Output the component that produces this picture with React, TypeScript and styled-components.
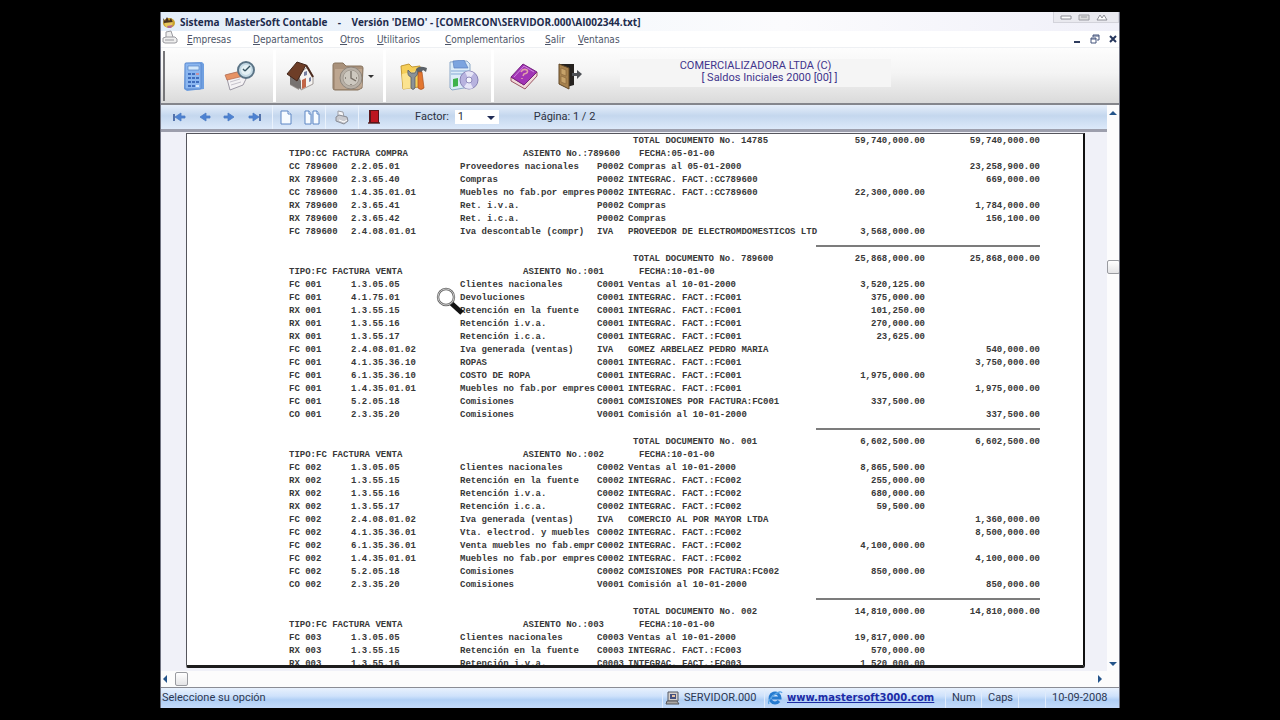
import React from "react";
import styled, { createGlobalStyle } from "styled-components";

const Global = createGlobalStyle`
  * { box-sizing: border-box; }
  body { margin: 0; background: #000; }
  button { font: inherit; color: inherit; background: none; border: 0; padding: 0; }
  svg { flex: none; }
`;

const ui = `"DejaVu Sans Condensed", "DejaVu Sans", sans-serif`;
const narrow = `Roboto, "Liberation Sans", sans-serif`;

const Desktop = styled.div`
  height: 100vh;
  padding: 12px 0;
  display: flex;
  justify-content: center;
  background: #000;
`;

const AppWindow = styled.div`
  width: 75%;
  min-width: 940px;
  display: flex;
  flex-direction: column;
  overflow: hidden;
  background: #fff;
  border-left: 1px solid #6f7280;
  border-right: 1px solid #6f7280;
`;

const TitleBar = styled.header`
  flex: none;
  height: 19px;
  display: flex;
  align-items: center;
  gap: 5px;
  padding-left: 1px;
  background: linear-gradient(90deg, #e3edf9, #f4f8fc 40%, #fbfbfd 65%, #f0f0f9);
  font: bold 10px/18px "Open Sans", sans-serif;
  color: #1d2b4c;
`;

const TitleText = styled.h1`
  flex: 1;
  margin: 0;
  font: inherit;
  white-space: pre;
`;

const WindowButtons = styled.div`
  align-self: flex-start;
  display: flex;
  gap: 6px;
  height: 11px;
  padding: 0 10px 0 6px;
  border: 1px solid #d3d3db;
  border-top: 0;
  background: #e9e9ef;
  button { display: flex; height: 10px; align-items: center; }
`;

const MenuBar = styled.nav`
  flex: none;
  height: 17px;
  display: flex;
  align-items: center;
  padding-left: 1px;
  background: #fff;
  border-bottom: 1px solid #eef0f3;
  font: 10px/15px ${ui};
  color: #4d5568;
`;

const MenuItem = styled.button<{ $w: number }>`
  width: ${(p) => p.$w}px;
  text-align: left;
  white-space: nowrap;
  &::first-letter { text-decoration: underline; }
`;

const MdiButtons = styled.div`
  margin-left: auto;
  display: flex;
  align-items: center;
  gap: 8px;
  padding-right: 1px;
  button { display: flex; }
`;

const ToolBar = styled.div`
  flex: none;
  height: 57px;
  display: flex;
  align-items: center;
  background: linear-gradient(#fdfdfd, #f4f4f4 45%, #dadada);
  border-bottom: 2px solid #85868c;
`;

const Grip = styled.span`
  width: 2px;
  height: 50px;
  margin-left: 2px;
  background: #77777a;
`;

const ToolGroup = styled.div<{ $w: number; $last?: boolean }>`
  width: ${(p) => p.$w}px;
  height: 52px;
  display: flex;
  align-items: center;
  justify-content: center;
  gap: 18px;
  border-right: ${(p) => (p.$last ? "0" : "3px solid #fff")};
`;

const ToolButton = styled.button`
  display: flex;
  align-items: center;
  gap: 4px;
`;

const CompanyBox = styled.div`
  width: 271px;
  height: 28px;
  margin: 0 0 6px 22px;
  padding-top: 1px;
  background: #f5f5f5;
  text-align: center;
  font: 11px/12px ${narrow};
  color: #41348c;
  p { margin: 0; }
  p + p { padding-left: 28px; }
`;

const Body = styled.div`
  flex: 1;
  min-height: 0;
  display: flex;
`;

const Main = styled.main`
  flex: 1;
  min-width: 0;
  display: flex;
  flex-direction: column;
`;

const NavBar = styled.div`
  flex: none;
  height: 27px;
  display: flex;
  align-items: center;
  background: linear-gradient(#e6eefa, #c4d7ee 45%, #dce9fa);
  border-bottom: 3px solid #9d9fad;
  font: 11px/14px ${narrow};
  color: #2b3040;
`;

const NavGroup = styled.div<{ $w: number; $last?: boolean }>`
  width: ${(p) => p.$w}px;
  height: 24px;
  display: flex;
  align-items: center;
  justify-content: center;
  gap: 10px;
  border-right: ${(p) => (p.$last ? "0" : "1px solid #eaf2fc")};
  button { display: flex; }
`;

const FactorLabel = styled.label`
  display: flex;
  align-items: center;
  gap: 6px;
  margin-left: 26px;
`;

const SelectWrap = styled.span`
  position: relative;
  display: flex;
  svg { position: absolute; right: 4px; top: 4px; pointer-events: none; }
`;

const FactorSelect = styled.select`
  appearance: none;
  width: 44px;
  height: 14px;
  padding: 0 3px;
  border: 0;
  background: #fff;
  font: 11px/14px ${narrow};
  color: #2b3040;
`;

const PageInfo = styled.span`
  margin-left: 35px;
`;

const Viewport = styled.section`
  position: relative;
  flex: 1;
  min-height: 0;
  padding: 1px 22px 3px 25px;
  background: #f0f1f8;
  display: flex;
`;

const Sheet = styled.div`
  flex: 1;
  min-width: 0;
  overflow: hidden;
  padding: 1px 43px 0 102px;
  background: #fff;
  border: 1px solid #55555c;
  border-right: 2px solid #111;
  border-bottom: 3px solid #1c1c1c;
  border-radius: 0 0 2px 2px;
`;

const Report = styled.table`
  width: 100%;
  table-layout: fixed;
  border-collapse: collapse;
  font: bold 9px/13px "Liberation Mono", monospace;
  color: #383838;
  td, th {
    height: 13px;
    padding: 0;
    font-weight: bold;
    text-align: left;
    white-space: nowrap;
  }
`;

const Cell = styled.td<{ $indent: number }>`
  && { padding-left: ${(p) => p.$indent}px; }
`;

const Amount = styled.td`
  && { text-align: right; }
`;

const RuleRow = styled.tr`
  && td { height: 14px; }
  hr { margin: 0; border: 0; height: 2px; background: #7c7c7c; }
`;

const Loupe = styled.svg`
  position: absolute;
  left: 275px;
  top: 155px;
`;

const VScroll = styled.div`
  flex: none;
  width: 12px;
  display: flex;
  flex-direction: column;
  align-items: center;
  justify-content: space-between;
  padding: 4px 0 3px;
  background: #fcfcfd;
  button { display: flex; }
`;

const Thumb = styled.button`
  && {
    width: 13px;
    height: 14px;
    border: 1px solid #999ba0;
    border-radius: 2px;
    background: linear-gradient(#fff, #e4e4e6);
  }
`;

const HScroll = styled.div`
  flex: none;
  height: 16px;
  display: flex;
  align-items: center;
  padding: 0 15px 0 0;
  background: #fcfcfc;
  button { display: flex; }
  button + button { margin-left: 6px; }
  button:last-child { margin-left: auto; }
`;

const Spacer = styled.span<{ $grow: number }>`
  flex: ${(p) => p.$grow} 1 0;
`;

const StatusBar = styled.footer`
  flex: none;
  height: 21px;
  display: flex;
  align-items: center;
  border-top: 1px solid #8a8c94;
  background: linear-gradient(#e8f1fd, #cfe2fb 40%, #b0cff5 60%, #c3dafa);
  font: 11px/14px ${narrow};
  color: #2c3853;
`;

const StatusPane = styled.div<{ $w?: number; $icon?: boolean }>`
  ${(p) => (p.$w ? `width: ${p.$w}px;` : "flex: 1;")}
  height: 19px;
  display: flex;
  align-items: center;
  gap: 4px;
  padding-left: ${(p) => (p.$icon ? 2 : 6)}px;
  border-left: 1px solid #dfebfb;
  white-space: nowrap;
  &:first-child { padding-left: 1px; border-left: 0; }
  a { font: bold 10px/14px "DejaVu Sans", sans-serif; color: #1c2ba6; }
`;

type Line = [string, string, string, string, string, string, string];
type Block = { tipo: string; asiento: string; fecha: string; lines: Line[]; total?: [string, string] };

const blocks: Block[] = [
  {
    tipo: "TIPO:CC FACTURA COMPRA", asiento: "789600", fecha: "05-01-00",
    lines: [
      ["CC 789600", "2.2.05.01", "Proveedores nacionales", "P0002", "Compras al 05-01-2000", "", "23,258,900.00"],
      ["RX 789600", "2.3.65.40", "Compras", "P0002", "INTEGRAC. FACT.:CC789600", "", "669,000.00"],
      ["CC 789600", "1.4.35.01.01", "Muebles no fab.por empres", "P0002", "INTEGRAC. FACT.:CC789600", "22,300,000.00", ""],
      ["RX 789600", "2.3.65.41", "Ret. i.v.a.", "P0002", "Compras", "", "1,784,000.00"],
      ["RX 789600", "2.3.65.42", "Ret. i.c.a.", "P0002", "Compras", "", "156,100.00"],
      ["FC 789600", "2.4.08.01.01", "Iva descontable (compr)", "IVA", "PROVEEDOR DE ELECTROMDOMESTICOS LTD", "3,568,000.00", ""],
    ],
    total: ["789600", "25,868,000.00"],
  },
  {
    tipo: "TIPO:FC FACTURA VENTA", asiento: "001", fecha: "10-01-00",
    lines: [
      ["FC 001", "1.3.05.05", "Clientes nacionales", "C0001", "Ventas al 10-01-2000", "3,520,125.00", ""],
      ["FC 001", "4.1.75.01", "Devoluciones", "C0001", "INTEGRAC. FACT.:FC001", "375,000.00", ""],
      ["RX 001", "1.3.55.15", "Retención en la fuente", "C0001", "INTEGRAC. FACT.:FC001", "101,250.00", ""],
      ["RX 001", "1.3.55.16", "Retención i.v.a.", "C0001", "INTEGRAC. FACT.:FC001", "270,000.00", ""],
      ["RX 001", "1.3.55.17", "Retención i.c.a.", "C0001", "INTEGRAC. FACT.:FC001", "23,625.00", ""],
      ["FC 001", "2.4.08.01.02", "Iva generada (ventas)", "IVA", "GOMEZ ARBELAEZ PEDRO MARIA", "", "540,000.00"],
      ["FC 001", "4.1.35.36.10", "ROPAS", "C0001", "INTEGRAC. FACT.:FC001", "", "3,750,000.00"],
      ["FC 001", "6.1.35.36.10", "COSTO DE ROPA", "C0001", "INTEGRAC. FACT.:FC001", "1,975,000.00", ""],
      ["FC 001", "1.4.35.01.01", "Muebles no fab.por empres", "C0001", "INTEGRAC. FACT.:FC001", "", "1,975,000.00"],
      ["FC 001", "5.2.05.18", "Comisiones", "C0001", "COMISIONES POR FACTURA:FC001", "337,500.00", ""],
      ["CO 001", "2.3.35.20", "Comisiones", "V0001", "Comisión al 10-01-2000", "", "337,500.00"],
    ],
    total: ["001", "6,602,500.00"],
  },
  {
    tipo: "TIPO:FC FACTURA VENTA", asiento: "002", fecha: "10-01-00",
    lines: [
      ["FC 002", "1.3.05.05", "Clientes nacionales", "C0002", "Ventas al 10-01-2000", "8,865,500.00", ""],
      ["RX 002", "1.3.55.15", "Retención en la fuente", "C0002", "INTEGRAC. FACT.:FC002", "255,000.00", ""],
      ["RX 002", "1.3.55.16", "Retención i.v.a.", "C0002", "INTEGRAC. FACT.:FC002", "680,000.00", ""],
      ["RX 002", "1.3.55.17", "Retención i.c.a.", "C0002", "INTEGRAC. FACT.:FC002", "59,500.00", ""],
      ["FC 002", "2.4.08.01.02", "Iva generada (ventas)", "IVA", "COMERCIO AL POR MAYOR LTDA", "", "1,360,000.00"],
      ["FC 002", "4.1.35.36.01", "Vta. electrod. y muebles", "C0002", "INTEGRAC. FACT.:FC002", "", "8,500,000.00"],
      ["FC 002", "6.1.35.36.01", "Venta muebles no fab.empr", "C0002", "INTEGRAC. FACT.:FC002", "4,100,000.00", ""],
      ["FC 002", "1.4.35.01.01", "Muebles no fab.por empres", "C0002", "INTEGRAC. FACT.:FC002", "", "4,100,000.00"],
      ["FC 002", "5.2.05.18", "Comisiones", "C0002", "COMISIONES POR FACTURA:FC002", "850,000.00", ""],
      ["CO 002", "2.3.35.20", "Comisiones", "V0001", "Comisión al 10-01-2000", "", "850,000.00"],
    ],
    total: ["002", "14,810,000.00"],
  },
  {
    tipo: "TIPO:FC FACTURA VENTA", asiento: "003", fecha: "10-01-00",
    lines: [
      ["FC 003", "1.3.05.05", "Clientes nacionales", "C0003", "Ventas al 10-01-2000", "19,817,000.00", ""],
      ["RX 003", "1.3.55.15", "Retención en la fuente", "C0003", "INTEGRAC. FACT.:FC003", "570,000.00", ""],
      ["RX 003", "1.3.55.16", "Retención i.v.a.", "C0003", "INTEGRAC. FACT.:FC003", "1,520,000.00", ""],
    ],
  },
];

const TotalRow = ({ no, amount }: { no: string; amount: string }) => (
  <tr>
    <td colSpan={4} />
    <Cell $indent={5}>TOTAL DOCUMENTO No. {no}</Cell>
    <Amount>{amount}</Amount>
    <Amount>{amount}</Amount>
  </tr>
);

const BlockRows = ({ block }: { block: Block }) => (
  <tbody>
    <tr>
      <th colSpan={2} scope="rowgroup">{block.tipo}</th>
      <Cell colSpan={2} $indent={63}>ASIENTO No.:{block.asiento}</Cell>
      <Cell colSpan={3} $indent={11}>FECHA:{block.fecha}</Cell>
    </tr>
    {block.lines.map((line, i) => (
      <tr key={i}>
        {line.map((text, c) => (c > 4 ? <Amount key={c}>{text}</Amount> : <td key={c}>{text}</td>))}
      </tr>
    ))}
    {block.total && (
      <>
        <RuleRow>
          <td colSpan={5} />
          <td colSpan={2}><hr /></td>
        </RuleRow>
        <TotalRow no={block.total[0]} amount={block.total[1]} />
      </>
    )}
  </tbody>
);

const AppIcon = () => (
  <svg width="13" height="14" viewBox="0 0 13 14">
    <ellipse cx="7" cy="8" rx="6" ry="5" fill="#c9a12c" />
    <path d="M1 3l2 3 2-4 2 4 2-3 2 5-9 1z" fill="#4b3320" />
    <path d="M2 8l9-1-1 4-6 1z" fill="#e8c75b" />
    <path d="M5 11l6-1-2 3H6z" fill="#b06a96" />
  </svg>
);

const DocIcon = () => (
  <svg width="16" height="14" viewBox="0 0 16 14" fill="#eee" stroke="#9a9aa0">
    <path d="M4 7V2l5-1 2 6M1 8l3-1h9l2 2v3l-2 1H3l-2-1z" />
    <path d="M3 10h9" />
  </svg>
);

const CalculatorIcon = () => (
  <svg width="24" height="30" viewBox="0 0 24 30">
    <path d="M3 2L20 1l2 2v25l-17 2-3-2z" fill="#6f9fe0" />
    <rect x="3" y="2" width="16" height="26" rx="1" fill="#8ab6f0" stroke="#5a89cf" />
    <path d="M6 5h11v4H6z" fill="#d3e8fc" stroke="#5684c4" strokeWidth=".7" />
    <g fill="#3f6dbd">
      <path d="M6 12h3v2H6zM10 12h3v2h-3zM6 16h3v2H6zM10 16h3v2h-3zM14 16h3v2h-3zM6 20h3v2H6zM10 20h3v2h-3zM14 20h3v2h-3zM6 24h3v2H6zM10 24h3v2h-3z" />
    </g>
    <path d="M14 12h3v2h-3z" fill="#c78fa0" />
    <path d="M14 24h3v2h-3z" fill="#dbe9fb" />
  </svg>
);

const AgendaIcon = () => (
  <svg width="32" height="32" viewBox="0 0 32 32">
    <path d="M2 15l16-4 4 8-3 6-13 5z" fill="#f4f2f4" stroke="#9d99a5" />
    <path d="M1 15l16-4 3 5-17 4z" fill="#e69264" stroke="#b56c50" strokeWidth=".7" />
    <path d="M6 22l10-3M7 25l10-3" stroke="#c5c2cb" />
    <circle cx="22" cy="10" r="8" fill="#c6dbe6" stroke="#5b7486" strokeWidth="2" />
    <circle cx="22" cy="10" r="5" fill="#e5f1f5" />
    <path d="M21 11l5-5M21 11l-2-2" stroke="#35515f" strokeWidth="1.4" />
  </svg>
);

const HouseIcon = () => (
  <svg width="28" height="30" viewBox="0 0 28 30">
    <path d="M13 12l9-6 5 9v8l-12 6z" fill="#f5f3f1" stroke="#8b8380" strokeWidth=".8" />
    <path d="M4 15l9 5v9l-9-5z" fill="#9a948f" />
    <path d="M4 14l6-1 5 7v8l-4-1-7-4z" fill="#777270" />
    <path d="M1 13L11 1l9 3-9 16z" fill="#6e3e27" stroke="#41261b" />
    <path d="M20 4l7 12" stroke="#4c2b1f" strokeWidth="2" />
    <path d="M16 19l4-2v9l-4 2z" fill="#c26547" />
    <path d="M18 11l3-1v4l-3 1zM23 17l2-1v4l-2 1z" fill="#777fa0" />
  </svg>
);

const FolderClockIcon = () => (
  <svg width="32" height="30" viewBox="0 0 32 30">
    <path d="M1 4q0-2 2-2h8l3 3h15q2 0 2 2l-1 20-4 2H3q-2 0-2-2z" fill="#a9917b" stroke="#88745f" />
    <path d="M3 8h27v17q0 2-3 3H3z" fill="#bda690" />
    <circle cx="19" cy="17" r="11" fill="#b9b1a7" stroke="#8d857c" />
    <circle cx="19" cy="17" r="8" fill="#cdc8bf" stroke="#a49d94" />
    <path d="M19 10v7l5 3M13 17h1M24 17h1M19 23v1" stroke="#776f67" strokeWidth="1.4" fill="none" />
  </svg>
);

const ToolsIcon = () => (
  <svg width="30" height="30" viewBox="0 0 30 30">
    <path d="M2 5l8-2 3 3 8-1-1 21-16 2z" fill="#f5ce58" stroke="#c29835" />
    <path d="M3 13l14-3-1 17-12 1z" fill="#fbe38f" />
    <path d="M17 8q3-4 11-1l-1 4-3-2-2 3-4-1z" fill="#5c6268" />
    <path d="M19 11h4l2 16q-3 3-6 0z" fill="#e3762f" stroke="#a7501f" strokeWidth=".7" />
    <path d="M9 9q-1 6 3 7v11q2 3 4 0V16q4-2 2-8l-2 4h-4z" fill="#8a9298" stroke="#555c63" strokeWidth=".8" />
  </svg>
);

const DiscIcon = () => (
  <svg width="32" height="32" viewBox="0 0 32 32">
    <path d="M3 2l17-1 3 3v23l-18 3-2-2z" fill="#dcecf8" stroke="#8da9c8" />
    <path d="M6 1l11-1 4 8H7z" fill="#7ba4df" stroke="#5a80bd" strokeWidth=".7" />
    <path d="M4 11h18M4 14h18" stroke="#85a9d5" />
    <path d="M6 19l5-1v8l-5 1z" fill="#3fb24c" />
    <circle cx="22" cy="20" r="9" fill="#b8b3df" stroke="#8782b5" />
    <path d="M22 20l-4-8a9 9 0 0 1 9 1zM22 20l4 8a9 9 0 0 1-9-1z" fill="#e6e5f7" />
    <circle cx="22" cy="20" r="3" fill="#f5f5fc" stroke="#908bbb" />
  </svg>
);

const BookIcon = () => (
  <svg width="30" height="28" viewBox="0 0 30 28">
    <path d="M2 15l13 8 13-13v4L16 27 2 19z" fill="#f0d9d9" stroke="#9b5664" />
    <path d="M2 15L14 2l14 8-13 13z" fill="#a134b5" stroke="#75217f" />
    <path d="M5 15l10-11 10 6" fill="none" stroke="#cf84dc" />
    <path d="M12 10q2-4 6-2 2 3-3 4l-1 2M13 16v1" fill="none" stroke="#e0a0a8" strokeWidth="1.6" />
  </svg>
);

const DoorIcon = () => (
  <svg width="26" height="28" viewBox="0 0 26 28">
    <path d="M2 2h15v21l-7 2z" fill="#25221f" />
    <path d="M2 2l10 4v21L2 22z" fill="#a7824e" stroke="#604727" />
    <path d="M4 6l5 2v6l-5-2zM4 14l5 2v6l-5-2z" fill="#c7a269" stroke="#84633a" strokeWidth=".6" />
    <path d="M15 11h5V8l5 4-5 5v-3h-5z" fill="#4d5055" />
  </svg>
);

const ArrowNav = ({ back, end }: { back?: boolean; end?: boolean }) => (
  <svg width="15" height="12" viewBox="0 0 15 12">
    <g transform={back ? "translate(15 0) scale(-1 1)" : undefined}>
      <path d="M2 5h4V2l6 4-6 4V7H2z" fill="#4d82d2" stroke="#4d7cc4" strokeWidth=".8" />
      {end && <path d="M13 3v7" stroke="#35589a" strokeWidth="1.6" />}
    </g>
  </svg>
);

const PageIcon = ({ two }: { two?: boolean }) => (
  <svg width="16" height="16" viewBox="0 0 16 16" fill="#f7fbff" stroke="#5d86c4">
    {two ? (
      <>
        <path d="M1 2h4l2 3v10H1zM9 2h4l2 3v10H9z" />
        <path d="M5 2v3h2M13 2v3h2" />
      </>
    ) : (
      <>
        <path d="M3 2h7l3 3v10H3z" />
        <path d="M10 2v3h3" />
      </>
    )}
  </svg>
);

const PrinterIcon = () => (
  <svg width="16" height="16" viewBox="0 0 16 16">
    <path d="M4 8V2l5 1 1 5" fill="#f5f5f7" stroke="#9c9fa7" />
    <path d="M2 8l3-2 8 2 1 4-4 3-8-3z" fill="#c9cacf" stroke="#888b94" />
    <path d="M5 11l5 2 3-2" stroke="#fff" fill="none" />
  </svg>
);

const RedDoorIcon = () => (
  <svg width="14" height="16" viewBox="0 0 14 16">
    <path d="M1 13h12v2H1z" fill="#765a60" />
    <path d="M2 1h10v13H2z" fill="#5a151a" />
    <path d="M4 2h7v11H4z" fill="#bd1620" />
  </svg>
);

const Triangle = ({ dir, fill = "#24548a" }: { dir: "up" | "down" | "left" | "right"; fill?: string }) => {
  const d = { up: "M0 6l4-4 4 4z", down: "M0 2h8L4 6z", left: "M6 0v8L2 4z", right: "M2 0l4 4-4 4z" }[dir];
  return <svg width="8" height="8" viewBox="0 0 8 8"><path d={d} fill={fill} /></svg>;
};

const SmallTriangle = () => (
  <svg width="6" height="8" viewBox="0 0 6 8"><path d="M0 3h6L3 6z" fill="#333" /></svg>
);

const ServerIcon = () => (
  <svg width="15" height="16" viewBox="0 0 15 16">
    <path d="M3 2h10v9H3z" fill="#d5d0cc" stroke="#555864" />
    <path d="M5 4h6v5H5z" fill="#44507f" />
    <path d="M7 5h3v2H7z" fill="#e9c4a0" />
    <path d="M2 11h10l2 3H1z" fill="#aaa7a4" stroke="#55565c" />
  </svg>
);

const BrowserIcon = () => (
  <svg width="16" height="16" viewBox="0 0 16 16" fill="none">
    <path d="M12 11a5 5 0 1 1 1-3H5" stroke="#267bd0" strokeWidth="3" />
    <path d="M2 14Q0 11 7 5q7-5 8-2" stroke="#5aa5e6" strokeWidth="1.3" />
  </svg>
);

export default function App() {
  return (
    <Desktop>
      <Global />
      <AppWindow>
        <TitleBar>
          <AppIcon />
          <TitleText>{"Sistema  MasterSoft Contable    -    Versión 'DEMO' - [COMERCON\\SERVIDOR.000\\AI002344.txt]"}</TitleText>
          <WindowButtons>
            <button aria-label="Minimizar"><svg width="12" height="7"><path d="M1 2h10v3H1z" fill="#fff" stroke="#8d8e96" /></svg></button>
            <button aria-label="Restaurar"><svg width="12" height="7"><path d="M1 1h10v5H1zM3 3h6" fill="#ddd" stroke="#9b9ca3" /></svg></button>
            <button aria-label="Cerrar"><svg width="12" height="7"><path d="M1 6l3-5 2 3 2-3 3 5z" fill="#fff" stroke="#8d8e96" /></svg></button>
          </WindowButtons>
        </TitleBar>
        <MenuBar>
          <MenuItem $w={25} aria-label="Documento"><DocIcon /></MenuItem>
          <MenuItem $w={66}>Empresas</MenuItem>
          <MenuItem $w={87}>Departamentos</MenuItem>
          <MenuItem $w={37}>Otros</MenuItem>
          <MenuItem $w={68}>Utilitarios</MenuItem>
          <MenuItem $w={100}>Complementarios</MenuItem>
          <MenuItem $w={33}>Salir</MenuItem>
          <MenuItem $w={46}>Ventanas</MenuItem>
          <MdiButtons>
            <button aria-label="Minimizar documento"><svg width="10" height="10"><path d="M2 8h6" stroke="#2e3c5e" strokeWidth="2" /></svg></button>
            <button aria-label="Restaurar documento"><svg width="10" height="10"><path d="M3 3V1h6v5H7M1 4h5v5H1zM1 5h5M3 2h6" fill="none" stroke="#45557c" /></svg></button>
            <button aria-label="Cerrar documento"><svg width="10" height="10"><path d="M2 2l6 6M8 2L2 8" stroke="#26365c" strokeWidth="2" /></svg></button>
          </MdiButtons>
        </MenuBar>
        <ToolBar>
          <Grip />
          <ToolGroup $w={111}>
            <ToolButton aria-label="Calculadora"><CalculatorIcon /></ToolButton>
            <ToolButton aria-label="Agenda"><AgendaIcon /></ToolButton>
          </ToolGroup>
          <ToolGroup $w={110}>
            <ToolButton aria-label="Inicio"><HouseIcon /></ToolButton>
            <ToolButton aria-label="Periodo"><FolderClockIcon /><SmallTriangle /></ToolButton>
          </ToolGroup>
          <ToolGroup $w={108}>
            <ToolButton aria-label="Herramientas"><ToolsIcon /></ToolButton>
            <ToolButton aria-label="Programas"><DiscIcon /></ToolButton>
          </ToolGroup>
          <ToolGroup $w={104} $last>
            <ToolButton aria-label="Ayuda"><BookIcon /></ToolButton>
            <ToolButton aria-label="Salir"><DoorIcon /></ToolButton>
          </ToolGroup>
          <CompanyBox>
            <p>COMERCIALIZADORA LTDA (C)</p>
            <p>[ Saldos Iniciales 2000 [00] ]</p>
          </CompanyBox>
        </ToolBar>
        <Body>
          <Main>
            <NavBar>
              <NavGroup $w={112}>
                <button aria-label="Primera página"><ArrowNav back end /></button>
                <button aria-label="Página anterior"><ArrowNav back /></button>
                <button aria-label="Página siguiente"><ArrowNav /></button>
                <button aria-label="Última página"><ArrowNav end /></button>
              </NavGroup>
              <NavGroup $w={53}>
                <button aria-label="Una página"><PageIcon /></button>
                <button aria-label="Dos páginas"><PageIcon two /></button>
              </NavGroup>
              <NavGroup $w={33}>
                <button aria-label="Imprimir"><PrinterIcon /></button>
              </NavGroup>
              <NavGroup $w={30} $last>
                <button aria-label="Cerrar informe"><RedDoorIcon /></button>
              </NavGroup>
              <FactorLabel>
                Factor:
                <SelectWrap>
                  <FactorSelect defaultValue="1"><option>1</option><option>2</option></FactorSelect>
                  <Triangle dir="down" fill="#1f2b55" />
                </SelectWrap>
              </FactorLabel>
              <PageInfo>Página: 1 / 2</PageInfo>
            </NavBar>
            <Viewport>
              <Sheet>
                <Report>
                  <colgroup>
                    <col style={{ width: 62 }} />
                    <col style={{ width: 109 }} />
                    <col style={{ width: 137 }} />
                    <col style={{ width: 31 }} />
                    <col />
                    <col style={{ width: 109 }} />
                    <col style={{ width: 115 }} />
                  </colgroup>
                  <tbody><TotalRow no="14785" amount="59,740,000.00" /></tbody>
                  {blocks.map((b) => <BlockRows key={b.asiento} block={b} />)}
                </Report>
              </Sheet>
              <Loupe width="30" height="30" viewBox="0 0 30 30">
                <path d="M15 16l11 10" stroke="#111" strokeWidth="5" />
                <circle cx="10" cy="10" r="8" fill="#fff" fillOpacity=".7" stroke="#666" strokeWidth="2.4" />
                <circle cx="10" cy="10" r="8" fill="none" stroke="#ddd" strokeWidth=".8" />
              </Loupe>
            </Viewport>
          </Main>
          <VScroll>
            <button aria-label="Subir"><Triangle dir="up" /></button>
            <Spacer $grow={27} />
            <Thumb aria-label="Desplazamiento vertical" />
            <Spacer $grow={73} />
            <button aria-label="Bajar"><Triangle dir="down" /></button>
          </VScroll>
        </Body>
        <HScroll>
          <button aria-label="Izquierda"><Triangle dir="left" /></button>
          <Thumb aria-label="Desplazamiento horizontal" />
          <button aria-label="Derecha"><Triangle dir="right" /></button>
        </HScroll>
        <StatusBar>
          <StatusPane>Seleccione su opción</StatusPane>
          <StatusPane $w={102} $icon><ServerIcon />SERVIDOR.000</StatusPane>
          <StatusPane $w={181} $icon><BrowserIcon /><a href="http://www.mastersoft3000.com">www.mastersoft3000.com</a></StatusPane>
          <StatusPane $w={36}>Num</StatusPane>
          <StatusPane $w={37}>Caps</StatusPane>
          <StatusPane $w={27} />
          <StatusPane $w={74}>10-09-2008</StatusPane>
        </StatusBar>
      </AppWindow>
    </Desktop>
  );
}
